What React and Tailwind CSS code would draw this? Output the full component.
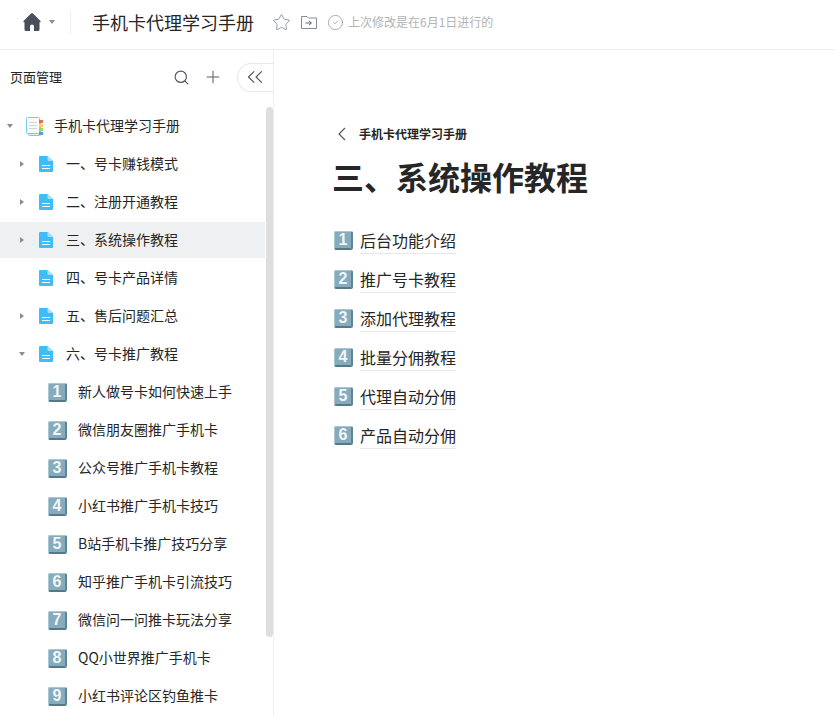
import { Search, Plus, ChevronsLeft, Star, CircleCheck } from "lucide-react";

const pages = [
    { title: "一、号卡赚钱模式", arrow: "right" },
    { title: "二、注册开通教程", arrow: "right" },
    { title: "三、系统操作教程", arrow: "right", active: true },
    { title: "四、号卡产品详情" },
    { title: "五、售后问题汇总", arrow: "right" },
    { title: "六、号卡推广教程", arrow: "down" },
];

const subPages = [
    "新人做号卡如何快速上手",
    "微信朋友圈推广手机卡",
    "公众号推广手机卡教程",
    "小红书推广手机卡技巧",
    "B站手机卡推广技巧分享",
    "知乎推广手机卡引流技巧",
    "微信问一问推卡玩法分享",
    "QQ小世界推广手机卡",
    "小红书评论区钓鱼推卡",
];

const links = ["后台功能介绍", "推广号卡教程", "添加代理教程", "批量分佣教程", "代理自动分佣", "产品自动分佣"];

function Keycap({ n }) {
    return (
        <div className="flex h-[19px] w-[19px] shrink-0 items-center justify-center rounded-[2px] border-t border-l border-[#a9c6d3] border-r-2 border-b-2 border-r-[#5d8596] border-b-[#55798a] bg-[#86abbd] font-['Liberation_Sans',sans-serif] text-[16px] font-bold leading-none text-[#f1f6f8]">
            {n}
        </div>
    );
}

function Arrow({ dir }) {
    if (!dir) return <span className="w-[5px]" />;
    return (
        <svg width="6" height="6" viewBox="0 0 6 6" className="fill-[#8a8d93]">
            {dir === "right" ? <path d="M1 0 L5 3 L1 6 Z" /> : <path d="M0 1 L6 1 L3 5 Z" />}
        </svg>
    );
}

function DocIcon() {
    return (
        <svg width="14" height="16" viewBox="0 0 14 16" className="shrink-0">
            <path d="M0 1 a1 1 0 0 1 1 -1 H8.5 L14 5 V15 a1 1 0 0 1 -1 1 H1 a1 1 0 0 1 -1 -1 Z" fill="#3fbcfa" />
            <path d="M8.5 0 L14 5 H9.5 a1 1 0 0 1 -1 -1 Z" fill="#a5e0fd" />
            <rect x="3" y="9" width="8" height="1" fill="#fff" />
            <rect x="3" y="12" width="8" height="1" fill="#fff" />
        </svg>
    );
}

function BookIcon() {
    return (
        <svg width="18" height="19" viewBox="0 0 18 19" className="shrink-0">
            <rect x="2.5" y="2.5" width="12" height="16" rx="1" fill="#d9f0fc" stroke="#7cc9f2" />
            <rect x="0.5" y="0.5" width="13" height="16" rx="1" fill="#fafbfc" stroke="#7cc9f2" />
            <rect x="3" y="5" width="8" height="1" fill="#d0d4d9" />
            <rect x="3" y="8" width="8" height="1" fill="#d0d4d9" />
            <rect x="3" y="11" width="8" height="1" fill="#d0d4d9" />
            <rect x="13" y="3" width="4" height="3" fill="#ef6a5c" />
            <rect x="13" y="7" width="4" height="3" fill="#f6cf6a" />
            <rect x="13" y="11" width="4" height="3" fill="#a8cf6c" />
            <rect x="13" y="15" width="4" height="3" fill="#4da3ea" />
        </svg>
    );
}

function App() {
    return (
        <div className="flex h-[716px] w-[835px] flex-col overflow-hidden bg-white font-['Noto_Sans_CJK_SC',sans-serif] text-[#262626]">
            <header className="flex h-[50px] shrink-0 items-center border-b border-[#eeeeee] pb-[5px]">
                <svg width="18" height="18" viewBox="0 0 18 18" className="ml-[23px] fill-[#4a4f5b]">
                    <path d="M8 0.5 a1.5 1.5 0 0 1 2 0 L17.5 8 Q18 9 17 9.2 L16.5 9.2 V16.5 a1.5 1.5 0 0 1 -1.5 1.5 H11 V13.5 a2 2 0 0 0 -4 0 V18 H3 a1.5 1.5 0 0 1 -1.5 -1.5 V9.2 H1 Q0 9 0.5 8 Z" />
                </svg>
                <svg width="6" height="4" viewBox="0 0 6 4" className="ml-[8px] fill-[#8a8d93]">
                    <path d="M0 0 H6 L3 4 Z" />
                </svg>
                <div className="ml-[15px] h-[24px] w-px bg-[#eeeeee]" />
                <h1 className="ml-[21px] text-[18px] font-normal leading-none">手机卡代理学习手册</h1>
                <Star size={19} strokeWidth={1.1} className="ml-[18px] text-[#858b96]" />
                <svg width="16" height="13" viewBox="0 0 16 13" fill="none" stroke="#858b96" className="ml-[10px]">
                    <path d="M0.5 12.5 V0.5 H6 L7.5 2 H15.5 V12.5 Z" />
                    <path d="M4.5 7 H10 M8 5 L10.5 7 L8 9" stroke="#5f6570" />
                </svg>
                <CircleCheck size={17} strokeWidth={1} className="ml-[10px] text-[#858b96]" />
                <span className="ml-[4px] text-[12px] leading-none text-[#b3b3b3]">上次修改是在6月1日进行的</span>
            </header>

            <div className="flex min-h-0 flex-1">
                <aside className="relative w-[274px] shrink-0 overflow-hidden border-r border-[#eeeeee]">
                    <div className="flex h-[58px] items-center pb-[4px] pl-[10px]">
                        <span className="whitespace-nowrap text-[13px]">页面管理</span>
                        <Search size={17} strokeWidth={1.7} className="ml-[111px] shrink-0 text-[#555b66]" />
                        <Plus size={20} strokeWidth={1.2} className="ml-[13px] shrink-0 text-[#555b66]" />
                        <div className="ml-[14px] flex h-[29px] w-[40px] shrink-0 items-center rounded-l-full border border-r-0 border-[#e8e8e8] pl-[4px]">
                            <ChevronsLeft size={26} strokeWidth={1.1} className="text-[#555b66]" />
                        </div>
                    </div>

                    {/* scrollbar sits over the tree */}
                    <div className="absolute left-[266px] top-[57px] h-[530px] w-[7px] rounded-full bg-[#dedede]" />

                    <nav className="w-[265px]">
                        <div className="mb-0.5 flex h-9 items-center">
                            <span className="ml-[7px] flex w-[6px]"><Arrow dir="down" /></span>
                            <span className="ml-[13px]"><BookIcon /></span>
                            <span className="ml-[10px] pb-[2px] text-[14px]">手机卡代理学习手册</span>
                        </div>

                        {pages.map((page) => (
                            <div key={page.title} className={`mb-0.5 flex h-9 items-center ${page.active ? "bg-[#eff0f2]" : ""}`}>
                                <span className="ml-[19px] flex w-[6px]"><Arrow dir={page.arrow} /></span>
                                <span className="ml-[14px]"><DocIcon /></span>
                                <span className="ml-[13px] pb-[2px] text-[14px]">{page.title}</span>
                            </div>
                        ))}

                        {subPages.map((title, i) => (
                            <div key={title} className="mb-0.5 flex h-9 items-center">
                                <span className="ml-[48px]"><Keycap n={i + 1} /></span>
                                <span className="ml-[11px] pb-[2px] text-[14px]">{title}</span>
                            </div>
                        ))}
                    </nav>
                </aside>

                <main className="flex-1 pl-[59px] pt-[75px]">
                    <div className="flex h-[18px] items-center text-[12px] font-bold">
                        <svg width="10" height="14" viewBox="0 0 10 14" fill="none" stroke="#555b66" strokeWidth="1.2" className="ml-[4px] mr-[12px]">
                            <path d="M8 1 L2 7 L8 13" />
                        </svg>
                        手机卡代理学习手册
                    </div>
                    <h2 className="-ml-px mt-[10px] text-[32px] font-bold leading-[46px]">三、系统操作教程</h2>
                    <ul className="mt-[28px]">
                        {links.map((text, i) => (
                            <li key={text} className="flex h-[39px] items-start">
                                <span className="ml-px mt-[4px]"><Keycap n={i + 1} /></span>
                                <span className="ml-[7px] border-b border-[#e8e8e8] text-[16px] leading-[26px]">{text}</span>
                            </li>
                        ))}
                    </ul>
                </main>
            </div>
        </div>
    );
}

export default App;
